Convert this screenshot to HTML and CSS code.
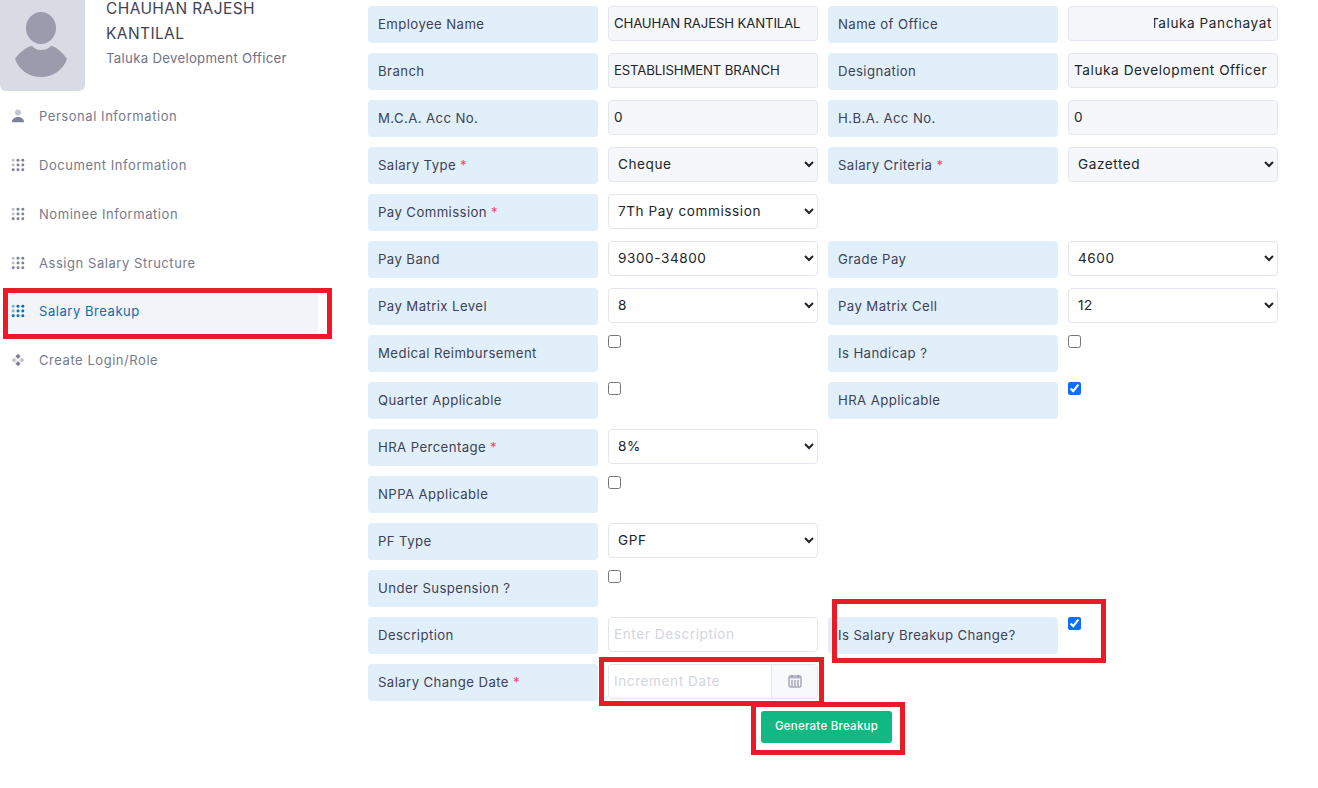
FILE: index.html
```html
<!DOCTYPE html>
<html lang="en">
<head>
<meta charset="utf-8">
<title>Salary Breakup</title>
<link rel="stylesheet" href="styles.css">
</head>
<body>
<div class="page">
  <aside class="side">
    <div class="profile">
      <div class="avatar">
        <svg viewBox="0 0 85 100" width="85" height="100"><ellipse cx="41" cy="37" rx="15" ry="16" fill="#9a9cae"/><path d="M15 68c4-6 11-12 17-13 3 3 6 4 9 4s7-1 10-4c6 1 12 7 16 13-4 11-14 18-26 18S19 79 15 68z" fill="#9a9cae"/></svg>
      </div>
      <div class="who">
        <div class="name">CHAUHAN RAJESH KANTILAL</div>
        <div class="role">Taluka Development Officer</div>
      </div>
    </div>
    <nav class="menu">
      <a class="item">
        <svg class="ico" viewBox="0 0 16 16"><circle cx="8" cy="4" r="3.4" fill="#c4c5d0"/><path d="M1 15c0-3.500 3-6 7-6s7 2.500 7 6z" fill="#7e8299"/></svg>
        <span>Personal Information</span>
      </a>
      <a class="item">
        <svg class="ico" viewBox="0 0 16 16"><g fill="#7e8299"><circle cx="2.500" cy="2.500" r="1.700" opacity=".5"/><circle cx="8" cy="2.500" r="1.700"/><circle cx="13.500" cy="2.500" r="1.700"/><circle cx="2.500" cy="8" r="1.700" opacity=".5"/><circle cx="8" cy="8" r="1.700"/><circle cx="13.500" cy="8" r="1.700"/><circle cx="2.500" cy="13.500" r="1.700"/><circle cx="8" cy="13.500" r="1.700"/><circle cx="13.500" cy="13.500" r="1.700"/></g></svg>
        <span>Document Information</span>
      </a>
      <a class="item">
        <svg class="ico" viewBox="0 0 16 16"><g fill="#7e8299"><circle cx="2.500" cy="2.500" r="1.700" opacity=".5"/><circle cx="8" cy="2.500" r="1.700"/><circle cx="13.500" cy="2.500" r="1.700"/><circle cx="2.500" cy="8" r="1.700" opacity=".5"/><circle cx="8" cy="8" r="1.700"/><circle cx="13.500" cy="8" r="1.700"/><circle cx="2.500" cy="13.500" r="1.700"/><circle cx="8" cy="13.500" r="1.700"/><circle cx="13.500" cy="13.500" r="1.700"/></g></svg>
        <span>Nominee Information</span>
      </a>
      <a class="item">
        <svg class="ico" viewBox="0 0 16 16"><g fill="#7e8299"><circle cx="2.500" cy="2.500" r="1.700" opacity=".5"/><circle cx="8" cy="2.500" r="1.700"/><circle cx="13.500" cy="2.500" r="1.700"/><circle cx="2.500" cy="8" r="1.700" opacity=".5"/><circle cx="8" cy="8" r="1.700"/><circle cx="13.500" cy="8" r="1.700"/><circle cx="2.500" cy="13.500" r="1.700"/><circle cx="8" cy="13.500" r="1.700"/><circle cx="13.500" cy="13.500" r="1.700"/></g></svg>
        <span>Assign Salary Structure</span>
      </a>
      <a class="item active">
        <svg class="ico" viewBox="0 0 16 16"><g fill="#0f6cbd"><circle cx="2.500" cy="2.500" r="1.700" opacity=".5"/><circle cx="8" cy="2.500" r="1.700"/><circle cx="13.500" cy="2.500" r="1.700"/><circle cx="2.500" cy="8" r="1.700" opacity=".5"/><circle cx="8" cy="8" r="1.700"/><circle cx="13.500" cy="8" r="1.700"/><circle cx="2.500" cy="13.500" r="1.700"/><circle cx="8" cy="13.500" r="1.700"/><circle cx="13.500" cy="13.500" r="1.700"/></g></svg>
        <span>Salary Breakup</span>
      </a>
      <a class="item">
        <svg class="ico" viewBox="0 0 16 16"><path d="M8 .8 11 3.800 8 6.800 5 3.800z" fill="#7e8299"/><path d="M8 9.200 11 12.200 8 15.200 5 12.200z" fill="#7e8299"/><path d="M3.600 5 6.600 8 3.600 11 .6 8z" fill="#c4c5d0"/><path d="M12.400 5 15.400 8 12.400 11 9.400 8z" fill="#c4c5d0"/></svg>
        <span>Create Login/Role</span>
      </a>
    </nav>
  </aside>

  <main class="card">
    <form class="grid">
      <label class="lab">Employee Name</label>
      <input class="ctl ro caps" value="CHAUHAN RAJESH KANTILAL" readonly>
      <label class="lab">Name of Office</label>
      <input class="ctl ro clipped" dir="rtl" value="Taluka Panchayat" readonly>

      <label class="lab">Branch</label>
      <input class="ctl ro caps" value="ESTABLISHMENT BRANCH" readonly>
      <label class="lab">Designation</label>
      <input class="ctl ro" value="Taluka Development Officer" readonly>

      <label class="lab">M.C.A. Acc No.</label>
      <input class="ctl ro" value="0" readonly>
      <label class="lab">H.B.A. Acc No.</label>
      <input class="ctl ro" value="0" readonly>

      <label class="lab">Salary Type <b>*</b></label>
      <select class="ctl ro sel"><option>Cheque</option></select>
      <label class="lab">Salary Criteria <b>*</b></label>
      <select class="ctl ro sel"><option>Gazetted</option></select>

      <label class="lab">Pay Commission <b>*</b></label>
      <select class="ctl sel rest"><option>7Th Pay commission</option></select>

      <label class="lab">Pay Band</label>
      <select class="ctl sel"><option>9300-34800</option></select>
      <label class="lab">Grade Pay</label>
      <select class="ctl sel"><option>4600</option></select>

      <label class="lab">Pay Matrix Level</label>
      <select class="ctl sel"><option>8</option></select>
      <label class="lab">Pay Matrix Cell</label>
      <select class="ctl sel"><option>12</option></select>

      <label class="lab">Medical Reimbursement</label>
      <input class="chk" type="checkbox">
      <label class="lab">Is Handicap ?</label>
      <input class="chk" type="checkbox">

      <label class="lab">Quarter Applicable</label>
      <input class="chk" type="checkbox">
      <label class="lab">HRA Applicable</label>
      <input class="chk" type="checkbox" checked>

      <label class="lab">HRA Percentage <b>*</b></label>
      <select class="ctl sel rest"><option>8%</option></select>

      <label class="lab">NPPA Applicable</label>
      <input class="chk rest" type="checkbox">

      <label class="lab">PF Type</label>
      <select class="ctl sel rest"><option>GPF</option></select>

      <label class="lab">Under Suspension ?</label>
      <input class="chk rest" type="checkbox">

      <label class="lab">Description</label>
      <input class="ctl" placeholder="Enter Description">
      <label class="lab">Is Salary Breakup Change?</label>
      <input class="chk" type="checkbox" checked>

      <label class="lab">Salary Change Date <b>*</b></label>
      <div class="ctl date rest">
        <input class="date-in" placeholder="Increment Date">
        <span class="date-ico">
          <svg viewBox="0 0 14 14" width="14" height="14"><rect x="1" y="2" width="12" height="11" rx="1" fill="#f4f5f8" stroke="#7e8299" stroke-width="1"/><rect x="1.500" y="2.500" width="11" height="2" fill="#b5b7c6"/><path d="M4 1v2M10 1v2" stroke="#7e8299" stroke-width="1"/><path d="M3 7h2M6 7h2M9 7h2M3 9h2M6 9h2M9 9h2M3 11h2M6 11h2M9 11h2" stroke="#7e8299" stroke-width="1"/></svg>
        </span>
      </div>
    </form>
    <div class="actions"><button class="btn" type="button">Generate Breakup</button></div>
  </main>
</div>
<div class="mark m1"></div>
<div class="mark m2"></div>
<div class="mark m3"></div>
<div class="mark m4"></div>
</body>
</html>
```
FILE: styles.css
```css
* { box-sizing: border-box; }
html, body { margin: 0; height: 100%; overflow: hidden; background: #fff; }
body { font-family: Inter, "Noto Sans", "Liberation Sans", sans-serif; position: relative; }

.page { display: flex; align-items: flex-start; height: 788px; }

.side {
  width: 332px;
  height: 425px;
  flex: none;
  margin-right: 18px;
  box-shadow: 0 0 12px rgba(76, 87, 125, .015);
}
.profile { display: flex; margin-top: -9px; height: 100px; }
.avatar { width: 85px; height: 100px; background: #d9dbe4; border-radius: 0 0 6px 6px; flex: none; }
.avatar svg { display: block; }
.who { margin-left: 21px; width: 190px; padding-top: 5px; }
.name { font-size: 15.500px; line-height: 25px; color: #3f4254; letter-spacing: .4px; font-weight: 400; }
.role { font-size: 13.200px; line-height: 25px; color: #6f7285; letter-spacing: .3px; }

.menu { display: flex; flex-direction: column; gap: 8px; padding: 5px 14px 0 9px; }
.item {
  display: flex;
  align-items: center;
  height: 41px;
  padding: 0 0 2px 2px;
  font-size: 13px;
  letter-spacing: .55px;
  color: #767a8c;
}
.item .ico { width: 14px; height: 14px; flex: none; margin-right: 14px; }
.item.active { background: #f1f4f8; color: #0f6cad; margin-top: -1px; box-shadow: 0 1px 0 #f1f4f8; }

.card {
  width: 955px;
  height: 740px;
  flex: none;
  padding: 6px 0 0 18px;
  box-shadow: 0 0 12px rgba(76, 87, 125, .015);
}
.grid {
  display: grid;
  grid-template-columns: 230px 210px 230px 210px;
  grid-auto-rows: 37px;
  gap: 10px;
  align-items: start;
}
.lab {
  height: 37px;
  display: flex;
  align-items: center;
  gap: 4px;
  padding: 0 0 1px 10px;
  background: #e1effb;
  border-radius: 4px;
  font-size: 13.200px;
  letter-spacing: .4px;
  color: #3f4254;
}
.lab b { color: #f1416c; font-weight: 400; }

.ctl {
  height: 35px;
  width: 210px;
  padding: 0 5px 2px;
  border: 1px solid #e4e6ef;
  border-radius: 4px;
  background: #fff;
  font-family: inherit;
  font-size: 13.600px;
  letter-spacing: .57px;
  color: #212529;
  outline: none;
}
.ctl::placeholder { color: #d3d6de; }
.ro { background: #f5f7fa; }
.caps { font-size: 13.200px; letter-spacing: -.14px; }
.clipped { padding-left: 85px; }
.rest { grid-column-end: span 3; }
.chk {
  width: 13px;
  height: 13px;
  margin: 0;
  accent-color: #0d6efd;
  justify-self: start;
}
.date { display: flex; padding: 0; overflow: hidden; }
.date-in {
  flex: 1;
  min-width: 0;
  border: 0;
  outline: none;
  padding: 0 5px 2px;
  font: inherit;
  letter-spacing: inherit;
  background: #fff;
}
.date-in::placeholder { color: #d3d6de; }
.date-ico {
  width: 46px;
  flex: none;
  display: flex;
  align-items: center;
  justify-content: center;
  padding-bottom: 2px;
  background: #f8f9fb;
  border-left: 1px solid #e4e6ef;
}

.actions { display: flex; justify-content: center; width: 917px; margin-top: 10px; }
.btn {
  width: 131px;
  height: 32px;
  padding: 0 0 2px;
  border: 0;
  border-radius: 3px;
  background: #10b981;
  color: #fff;
  font-family: inherit;
  font-size: 11.500px;
  letter-spacing: .25px;
  font-weight: 500;
}

.mark { position: absolute; border: 5px solid #e81c26; pointer-events: none; }
.m1 { left: 3px; top: 288px; width: 329px; height: 51px; }
.m2 { left: 832px; top: 599px; width: 274px; height: 64px; }
.m3 { left: 599px; top: 657px; width: 225px; height: 49px; }
.m4 { left: 751px; top: 702px; width: 154px; height: 53px; }
```
